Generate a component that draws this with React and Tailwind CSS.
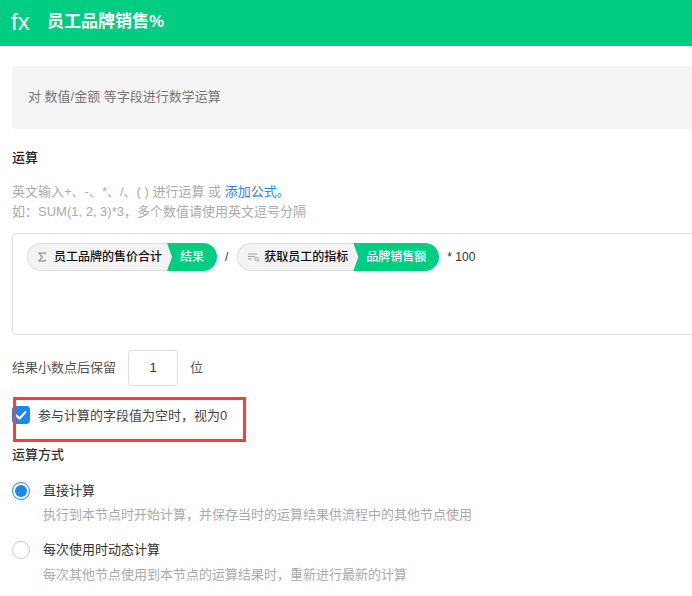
import React from 'react';

const fontStack = 'font-["Liberation_Sans","Noto_Sans_CJK_SC",sans-serif]';

const SumIcon = () => (
  <svg width="8" height="10" viewBox="0 0 8 10" className="shrink-0">
    <path d="M7.5 2.5V1H1L4.2 5L1 9H7.5V7.5" fill="none" stroke="#a3a3a3" strokeWidth="1.7" />
  </svg>
);

const LookupIcon = () => (
  <svg width="12" height="9" viewBox="0 0 12 9" className="shrink-0">
    <path d="M0 1H9M0 3.5H7M0 6H4" fill="none" stroke="#a3a3a3" strokeWidth="1.1" />
    <circle cx="8.5" cy="6" r="1.7" fill="none" stroke="#a3a3a3" strokeWidth="1" />
    <path d="M9.8 7.3L11.5 8.8" fill="none" stroke="#a3a3a3" strokeWidth="1" />
  </svg>
);

const FieldPill = ({ icon, name, field, leftWidth, rightWidth, gap }) => (
  <div className="flex h-7 items-stretch">
    <div
      className={`flex items-center rounded-l-full border border-r-0 border-[#dddddd] bg-[#f3f3f3] pl-[10px] ${leftWidth} ${gap}`}
    >
      {icon}
      <span className="text-xs font-medium text-[#111111] whitespace-nowrap">{name}</span>
    </div>
    <div
      className={`-ml-[5px] flex items-center justify-center rounded-r-full bg-[#00cc82] text-xs font-medium text-white whitespace-nowrap [clip-path:polygon(0_0,100%_0,100%_100%,0_100%,5px_50%)] ${rightWidth}`}
    >
      {field}
    </div>
  </div>
);

const RadioRow = ({ checked, title, desc, descGap }) => (
  <div className="flex gap-[13px]">
    <div className="pt-px">
      {checked ? (
        <div className="flex h-[18px] w-[18px] items-center justify-center rounded-full border border-[#1e88e5]">
          <div className="h-3 w-3 rounded-full bg-[#1e88e5]" />
        </div>
      ) : (
        <div className="h-[18px] w-[18px] rounded-full border border-[#cccccc]" />
      )}
    </div>
    <div>
      <div className="text-[13px] leading-5 text-[#333333]">{title}</div>
      <div className={`text-[13px] leading-5 text-[#aaaaaa] ${descGap}`}>{desc}</div>
    </div>
  </div>
);

export default function App() {
  return (
    <div className={`h-[596px] w-[692px] overflow-hidden bg-white ${fontStack}`}>
      <div className="flex h-[46px] items-center bg-[#00cc82] pl-[11px] text-white">
        <span className="w-9 pb-[3px] text-2xl leading-none">fx</span>
        <span className="pb-[2px] text-[17px] font-bold">员工品牌销售%</span>
      </div>

      <div className="pl-3 pt-5">
        <div className="-mr-3 flex h-[63px] items-center rounded-sm bg-[#f4f4f4] pb-[2px] pl-4 text-[13px] text-[#757575]">
          对 数值/金额 等字段进行数学运算
        </div>

        <div className="mt-[19px] text-[13px] font-medium leading-5 text-[#222222]">运算</div>

        <div className="mt-[14px] leading-5 text-[#aaaaaa]">
          <div className="text-[13px]">
            英文输入+、-、*、/、( ) 进行运算 或 <span className="text-[#2d83e8]">添加公式。</span>
          </div>
          <div className="text-[13px]">如：SUM(1, 2, 3)*3，多个数值请使用英文逗号分隔</div>
        </div>

        <div className="-mr-5 mt-[11px] h-[102px] rounded-sm border border-[#dddddd] pl-[14px] pt-[9px]">
          <div className="flex h-7 items-center">
            <FieldPill
              icon={<SumIcon />}
              name="员工品牌的售价合计"
              field="结果"
              leftWidth="w-[145px]"
              rightWidth="w-[50px]"
              gap="gap-[8px]"
            />
            <span className="ml-2 mr-[9px] text-xs text-[#333333]">/</span>
            <FieldPill
              icon={<LookupIcon />}
              name="获取员工的指标"
              field="品牌销售额"
              leftWidth="w-[121px]"
              rightWidth="w-[86px]"
              gap="gap-1"
            />
            <span className="ml-2 text-xs text-[#333333]">* 100</span>
          </div>
        </div>

        <div className="mt-[15px] flex items-center text-[13px] text-[#555555]">
          <span className="w-[116px]">结果小数点后保留</span>
          <div className="flex h-9 w-[50px] items-center justify-center rounded border border-[#dddddd] text-[#333333]">
            1
          </div>
          <span className="ml-3">位</span>
        </div>

        <div className="relative mt-[20px] flex h-[18px] items-center gap-2">
          <div className="flex h-[18px] w-[18px] items-center justify-center rounded-sm bg-[#1e88e5]">
            <svg width="12" height="10" viewBox="0 0 12 10">
              <path d="M1 5L4.5 8.5L11 1.5" fill="none" stroke="white" strokeWidth="2" />
            </svg>
          </div>
          <span className="pt-[2px] text-[13px] text-[#444444]">参与计算的字段值为空时，视为0</span>
          <div className="absolute -top-[9px] left-px h-[45px] w-[233px] border-[3px] border-[#ff3b3b]" />
        </div>

        <div className="mt-[21px] text-[13px] font-medium leading-5 text-[#333333]">运算方式</div>

        <div className="mt-[16px] flex flex-col gap-[15px]">
          <RadioRow checked title="直接计算" desc="执行到本节点时开始计算，并保存当时的运算结果供流程中的其他节点使用" descGap="mt-1" />
          <RadioRow title="每次使用时动态计算" desc="每次其他节点使用到本节点的运算结果时，重新进行最新的计算" descGap="mt-[5px]" />
        </div>
      </div>
    </div>
  );
}
